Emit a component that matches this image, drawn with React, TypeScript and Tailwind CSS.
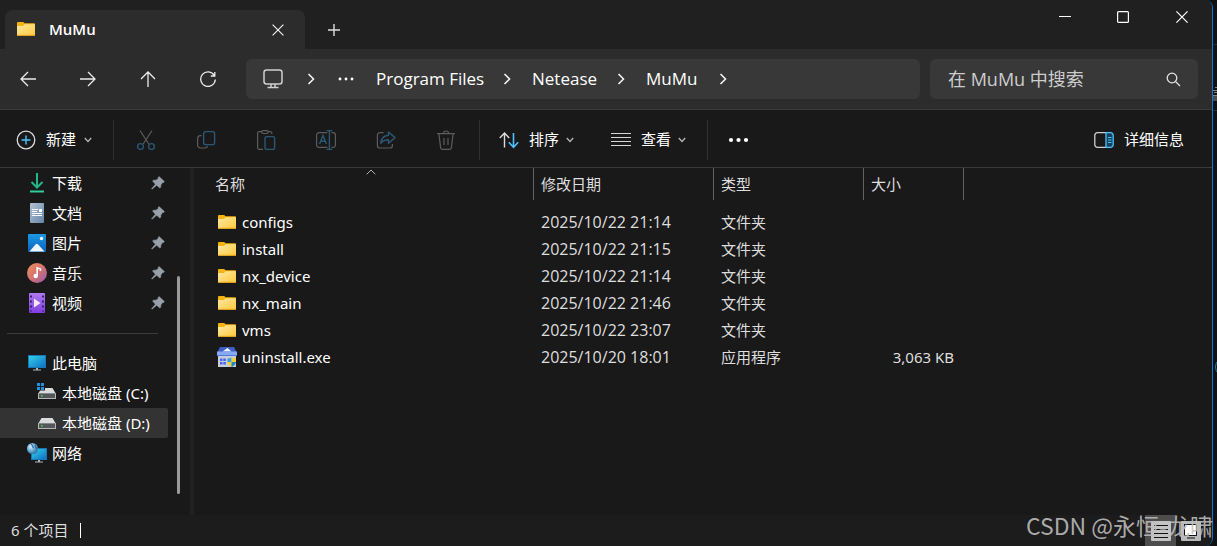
import type { ReactNode } from 'react';

type IconProps = { className?: string };

function FolderIcon() {
  return (
    <svg width="20" height="18" viewBox="0 0 20 18" className="shrink-0" aria-hidden="true">
      <defs>
        <linearGradient id="folder" x1="0" y1="0" x2="1" y2="1">
          <stop offset="0" stopColor="#ffe9a6" />
          <stop offset="1" stopColor="#ffc93a" />
        </linearGradient>
      </defs>
      <path d="M1 2a1 1 0 0 1 1-1h5.200l1.400 1.200H18a1 1 0 0 1 1 1V14H1z" fill="#f7b410" />
      <path d="M1 5h6l1.600-1.800H19V14a.8.8 0 0 1-.8.8H1.800A.8.8 0 0 1 1 14z" fill="url(#folder)" />
      <path d="M1 14.300h18" stroke="#e8a317" strokeWidth="1" />
    </svg>
  );
}

function InstallerIcon() {
  return (
    <svg width="20" height="22" viewBox="0 0 20 22" className="shrink-0" aria-hidden="true">
      <path d="M3 0h14l2.500 5H.5z" fill="#3f5fc4" />
      <path d="M5.500 4.500 10.500 1 14.500 4.500z" fill="#f4f7ff" />
      <rect x="0" y="4.500" width="20" height="4" fill="#86a9f5" />
      <rect x="1" y="8.500" width="18" height="11.500" fill="#c6cddb" />
      <rect x="0" y="8" width="20" height="1" fill="#5478d6" />
      <path d="M3 11.500h2.500V14H3zM6.300 11.500h2.500V14H6.300zM3 15h2.500v2.500H3zM6.300 15h2.500v2.500H6.300z" fill="#4a62f0" />
      <path d="M10.500 11.500c2 0 3-.8 4-1.300v4.800h-4z" fill="#2f9fe8" />
      <path d="M14.500 10.200c1 .5 2 1.300 4.500 1.300V15h-4.500z" fill="#f8d022" />
      <path d="M10.500 15h4v5c-2-1-3.800-2.500-4-5z" fill="#f8d022" />
      <path d="M14.500 15H19c-.2 2.500-2.500 4-4.500 5z" fill="#1f86cc" />
    </svg>
  );
}

function ChevronRight({ className }: IconProps) {
  return (
    <svg width="8" height="12" viewBox="0 0 8 12" fill="none" stroke="#f2f2f2" strokeWidth="1.600" className={className} aria-hidden="true">
      <path d="M1.500 1 6.500 6l-5 5" />
    </svg>
  );
}

function ChevronDown() {
  return (
    <svg width="8" height="6" viewBox="0 0 8 6" fill="none" stroke="#b5b5b5" strokeWidth="1.300" aria-hidden="true">
      <path d="M.8 1 4 4.500 7.200 1" />
    </svg>
  );
}

function Pin() {
  return (
    <svg width="14" height="14" viewBox="0 0 14 14" className="shrink-0" aria-hidden="true">
      <path d="M8 .6 13.400 5.600 12.600 6.400 11.600 6.400 9.800 9 9.700 11.300 8.900 12 5.600 9.200 1.200 13 .6 12.800 4.400 8.200 1.600 4.900 2.500 4.200 5 4.200 7.300 2.400 7.300 1.200z" fill="#98a1a9" stroke="#98a1a9" strokeWidth=".6" strokeLinejoin="round" />
    </svg>
  );
}

function Dots({ size, r }: { size: number; r: number }) {
  return (
    <svg width={size} height="6" viewBox="0 0 20 6" fill="#fff" aria-hidden="true">
      <circle cx="2.500" cy="3" r={r} />
      <circle cx="10" cy="3" r={r} />
      <circle cx="17.500" cy="3" r={r} />
    </svg>
  );
}

function Svg20({ children }: { children: ReactNode }) {
  return (
    <svg width="20" height="20" viewBox="0 0 20 20" fill="none" strokeWidth="1.200" className="shrink-0" aria-hidden="true">
      {children}
    </svg>
  );
}

const GREY = '#5c5c5c';
const BLUE = '#2a5875';

const disabledActions: { label: string; icon: ReactNode }[] = [
  {
    label: '剪切',
    icon: (
      <Svg20>
        <path d="M4 0.500 12.800 14M16 0.500 7.200 14" stroke={GREY} />
        <circle cx="4.500" cy="16.500" r="2.900" stroke={BLUE} strokeWidth="1.400" />
        <circle cx="15.500" cy="16.500" r="2.900" stroke={BLUE} strokeWidth="1.400" />
      </Svg20>
    ),
  },
  {
    label: '复制',
    icon: (
      <Svg20>
        <path d="M5.500 5.600h-1A3 3 0 0 0 1.600 8.500V15a3 3 0 0 0 3 3H9a2.600 2.600 0 0 0 2.500-2" stroke={GREY} />
        <rect x="7.600" y="1.600" width="11" height="13" rx="2.200" stroke={BLUE} strokeWidth="1.400" />
      </Svg20>
    ),
  },
  {
    label: '粘贴',
    icon: (
      <Svg20>
        <path d="M6 1.600H3.300A1.700 1.700 0 0 0 1.600 3.300v14.400a1.700 1.700 0 0 0 1.700 1.700H7M12 1.600h2.200a1.700 1.700 0 0 1 1.700 1.700v1" stroke={GREY} />
        <rect x="5.600" y="0.700" width="6.600" height="2.800" rx="1.400" stroke={GREY} />
        <rect x="9" y="6.600" width="9.600" height="12.800" rx="1.600" stroke={BLUE} strokeWidth="1.400" />
      </Svg20>
    ),
  },
  {
    label: '重命名',
    icon: (
      <Svg20>
        <path d="M11.300 2.600H3A2.400 2.400 0 0 0 .6 5v10A2.400 2.400 0 0 0 3 17.400h8.300M15.500 2.600H17A2.400 2.400 0 0 1 19.400 5v10a2.400 2.400 0 0 1-2.400 2.400h-1.500" stroke={GREY} />
        <path d="M3.600 14 7 5.500 10.400 14M4.800 11.200h4.400M13.400 .6v18.800M10.600 .6h5.600M10.600 19.400h5.600" stroke={BLUE} strokeWidth="1.400" />
      </Svg20>
    ),
  },
  {
    label: '共享',
    icon: (
      <Svg20>
        <path d="M7.500 2.600H4A2.600 2.600 0 0 0 1.400 5.200v10.200A2.600 2.600 0 0 0 4 18h9.800a2.600 2.600 0 0 0 2.600-2.600V14" stroke={GREY} />
        <path d="M12.500 2 19 7.600l-6.500 5.600V9.800c-3.600 0-5.700 1-7.700 3.400.3-4.300 3-7.400 7.700-7.900z" stroke={BLUE} strokeWidth="1.400" strokeLinejoin="round" />
      </Svg20>
    ),
  },
  {
    label: '删除',
    icon: (
      <Svg20>
        <path d="M1 3.600h18M7.400 3.600a2.600 2.600 0 0 1 5.200 0M2.900 3.600l1.700 14a2 2 0 0 0 2 1.800h6.800a2 2 0 0 0 2-1.800l1.700-14M8 8v7M12 8v7" stroke={GREY} />
      </Svg20>
    ),
  },
];

function DownloadIcon() {
  return (
    <Svg20>
      <path d="M10 0v14M4.500 9l5.500 5.500L15.500 9" stroke="#22b68b" strokeWidth="2" />
      <path d="M3 18.500h14" stroke="#2fcf96" strokeWidth="2" />
    </Svg20>
  );
}

function DocumentIcon() {
  return (
    <Svg20>
      <defs>
        <linearGradient id="doc" x1="0" y1="0" x2="1" y2="1">
          <stop offset="0" stopColor="#b3c3d4" />
          <stop offset="1" stopColor="#6485a6" />
        </linearGradient>
      </defs>
      <rect x="3" y="0" width="14" height="20" rx="1" fill="url(#doc)" />
      <path d="M5 6.500h6M5 8.500h5M5 10.500h10M5 12.500h10" stroke="#fff" strokeWidth="1" />
      <rect x="12" y="6" width="3" height="3" fill="#fff" />
    </Svg20>
  );
}

function PictureIcon() {
  return (
    <Svg20>
      <defs>
        <linearGradient id="pic" x1="0" y1="0" x2="0" y2="1">
          <stop offset="0" stopColor="#1c98e6" />
          <stop offset="1" stopColor="#0b62bb" />
        </linearGradient>
      </defs>
      <rect x="1" y="1" width="18" height="18" rx="1" fill="url(#pic)" />
      <path d="M2.500 18.500 8.700 11.300a1.500 1.500 0 0 1 2.200 0l6.600 7.200z" fill="#eef6ff" />
      <circle cx="14.500" cy="5.500" r="1.700" fill="#fff" />
    </Svg20>
  );
}

function MusicIcon() {
  return (
    <Svg20>
      <defs>
        <linearGradient id="mus" x1="0" y1="0" x2="1" y2="1">
          <stop offset="0" stopColor="#f2905a" />
          <stop offset=".5" stopColor="#d4736f" />
          <stop offset="1" stopColor="#9358b0" />
        </linearGradient>
      </defs>
      <circle cx="10" cy="10" r="10" fill="url(#mus)" />
      <circle cx="8.700" cy="13" r="2.200" fill="#fff" />
      <path d="M10.200 13V4.800l3.300 1.200v2" stroke="#fff" strokeWidth="1.600" />
    </Svg20>
  );
}

function VideoIcon() {
  return (
    <Svg20>
      <defs>
        <linearGradient id="vid" x1="0" y1="0" x2="0" y2="1">
          <stop offset="0" stopColor="#b07af0" />
          <stop offset="1" stopColor="#7f3fe0" />
        </linearGradient>
      </defs>
      <rect x="2" y="0" width="16" height="20" rx="1" fill="url(#vid)" />
      <path d="M4 2.500v16M16 2.500v16" stroke="#3a1f78" strokeWidth="2" strokeDasharray="2 3" />
      <path d="M7 5.500 13.500 10 7 14.500z" fill="#f3eaff" />
    </Svg20>
  );
}

function PcIcon() {
  return (
    <Svg20>
      <defs>
        <linearGradient id="pc" x1="0" y1="0" x2="1" y2="1">
          <stop offset="0" stopColor="#35d0e4" />
          <stop offset="1" stopColor="#0f70c8" />
        </linearGradient>
      </defs>
      <rect x="1" y="2" width="18" height="13" fill="#1579b5" />
      <rect x="2" y="3" width="16" height="11" fill="url(#pc)" />
      <path d="M9 15h2v2H9zM6 16.500h8v1H6z" fill="#a9b4bd" />
    </Svg20>
  );
}

function DriveBody() {
  return (
    <>
      <path d="M4.500 5h11L19 11H1z" fill="#d9dbdd" />
      <rect x="1" y="10" width="18" height="6" fill="#b4b6b8" />
      <rect x="2" y="10.500" width="16" height="4.500" fill="#55585a" />
      <rect x="4" y="12" width="1.500" height="1.500" fill="#3ee04a" />
    </>
  );
}

function SystemDriveIcon() {
  return (
    <Svg20>
      <DriveBody />
      <rect x="-1" y="-1" width="9" height="8.500" fill="#191919" />
      <path d="M0 0h3v3H0zM4 0h3v3H4zM0 4h3v3H0zM4 4h3v3H4z" fill="#1f93e0" />
    </Svg20>
  );
}

function DriveIcon() {
  return (
    <Svg20>
      <DriveBody />
    </Svg20>
  );
}

function NetworkIcon() {
  return (
    <Svg20>
      <defs>
        <radialGradient id="globe" cx=".35" cy=".35" r=".7">
          <stop offset="0" stopColor="#dff1fb" />
          <stop offset=".5" stopColor="#6fb0d6" />
          <stop offset="1" stopColor="#2b6f9e" />
        </radialGradient>
      </defs>
      <rect x="4" y="5" width="16" height="12" fill="#1579b5" />
      <rect x="5" y="6" width="14" height="10" fill="url(#pc)" />
      <path d="M11 17h2v2h-2zM8 18.500h8v1H8z" fill="#a9b4bd" />
      <circle cx="5.500" cy="5.500" r="5.500" fill="url(#globe)" />
      <path d="M4 1c2 1 1 3 3 4M8 2c1 1 0 3 2 4" stroke="#2c6d99" />
    </Svg20>
  );
}

const pinned = [
  { label: '下载', icon: <DownloadIcon /> },
  { label: '文档', icon: <DocumentIcon /> },
  { label: '图片', icon: <PictureIcon /> },
  { label: '音乐', icon: <MusicIcon /> },
  { label: '视频', icon: <VideoIcon /> },
];

const places = [
  { label: '此电脑', icon: <PcIcon />, nested: false, selected: false },
  { label: '本地磁盘 (C:)', icon: <SystemDriveIcon />, nested: true, selected: false },
  { label: '本地磁盘 (D:)', icon: <DriveIcon />, nested: true, selected: true },
  { label: '网络', icon: <NetworkIcon />, nested: false, selected: false },
];

const files = [
  { name: 'configs', date: '2025/10/22 21:14', type: '文件夹', size: '' },
  { name: 'install', date: '2025/10/22 21:15', type: '文件夹', size: '' },
  { name: 'nx_device', date: '2025/10/22 21:14', type: '文件夹', size: '' },
  { name: 'nx_main', date: '2025/10/22 21:46', type: '文件夹', size: '' },
  { name: 'vms', date: '2025/10/22 23:07', type: '文件夹', size: '' },
  { name: 'uninstall.exe', date: '2025/10/20 18:01', type: '应用程序', size: '3,063 KB' },
];

function TitleBar() {
  return (
    <header className="flex h-[49px] shrink-0 bg-[#202020] pl-[5px]">
      <div className="mt-[10px] flex w-[300px] items-center rounded-t-lg bg-[#2c2c2c] pr-[15px] pl-[11px]">
        <FolderIcon />
        <h1 className="ml-[13px] flex-1 font-['Open_Sans'] text-[15px] font-semibold">MuMu</h1>
        <button type="button" aria-label="关闭标签页" className="flex size-6 items-center justify-center">
          <svg width="12" height="12" viewBox="0 0 12 12" stroke="#eee" strokeWidth="1.200">
            <path d="m.6.6 10.800 10.800M11.400.6.6 11.400" />
          </svg>
        </button>
      </div>
      <button type="button" aria-label="新建标签页" className="mt-[10px] ml-[9px] flex w-10 items-center justify-center">
        <svg width="12" height="12" viewBox="0 0 12 12" stroke="#ddd" strokeWidth="1.400">
          <path d="M6 0v12M0 6h12" />
        </svg>
      </button>
      <div className="ml-auto flex h-[34px]">
        <button type="button" aria-label="最小化" className="flex w-[58px] items-center justify-center">
          <svg width="12" height="12" viewBox="0 0 12 12" stroke="#fff">
            <path d="M0 5.500h12" />
          </svg>
        </button>
        <button type="button" aria-label="最大化" className="flex w-[58px] items-center justify-center">
          <svg width="12" height="12" viewBox="0 0 12 12" fill="none" stroke="#fff" strokeWidth="1.200">
            <rect x=".6" y=".6" width="10.800" height="10.800" rx="1" />
          </svg>
        </button>
        <button type="button" aria-label="关闭" className="flex w-[60px] items-center justify-center">
          <svg width="12" height="12" viewBox="0 0 12 12" stroke="#fff" strokeWidth="1.200">
            <path d="m.4.4 11.200 11.200M11.600.4.4 11.600" />
          </svg>
        </button>
      </div>
    </header>
  );
}

const navButtons = [
  { label: '后退', d: 'M1 8h15M8 1 1 8l7 7' },
  { label: '前进', d: 'M0 8h15M8 1l7 7-7 7' },
  { label: '向上', d: 'M8 1v15M1 8l7-7 7 7' },
  { label: '刷新', d: 'M14.300 4.400A7.300 7.300 0 1 0 15.300 8.500M14.800 1v4h-4' },
];

function AddressBar() {
  return (
    <div className="flex h-[60px] shrink-0 items-center bg-[#2c2c2c] pr-[14px] pl-2">
      <div className="flex gap-5">
        {navButtons.map((b) => (
          <button key={b.label} type="button" aria-label={b.label} className="flex size-10 items-center justify-center">
            <svg width="16" height="16" viewBox="0 0 16 16" fill="none" stroke="#ececec" strokeWidth="1.300">
              <path d={b.d} />
            </svg>
          </button>
        ))}
      </div>
      <nav aria-label="路径" className="ml-[18px] flex h-10 flex-1 items-center rounded-md bg-[#383838] pl-4 font-['Open_Sans'] text-[17px]">
        <svg width="22" height="20" viewBox="0 0 22 20" fill="none" stroke="#cfcfcf" strokeWidth="1.500" aria-hidden="true">
          <rect x="2" y="1" width="18" height="14" rx="2.500" />
          <path d="M9 15v3M13 15v3M5.500 18.500h11" />
        </svg>
        <ChevronRight className="mx-[23px]" />
        <Dots size={16} r={1.8} />
        <a href="#program-files" className="ml-[22px] w-[106px] whitespace-nowrap">Program Files</a>
        <ChevronRight className="mx-[21px]" />
        <a href="#netease" className="w-[64px] whitespace-nowrap">Netease</a>
        <ChevronRight className="mx-[21px]" />
        <a href="#mumu" className="w-[52px] whitespace-nowrap">MuMu</a>
        <ChevronRight className="mx-[21px]" />
      </nav>
      <label className="ml-[10px] flex h-10 w-[268px] items-center rounded-md bg-[#383838] pr-[17px] pl-[18px]">
        <input
          type="text"
          aria-label="搜索"
          placeholder="在 MuMu 中搜索"
          className="w-0 flex-1 bg-transparent font-['Open_Sans','Noto_Sans_CJK_SC'] text-lg outline-none placeholder:text-[#cdcdcd]"
        />
        <svg width="15" height="15" viewBox="0 0 15 15" fill="none" stroke="#e4e4e4" strokeWidth="1.300" aria-hidden="true">
          <circle cx="6" cy="6" r="4.800" />
          <path d="m9.500 9.500 4.500 4.500" />
        </svg>
      </label>
    </div>
  );
}

function Toolbar() {
  return (
    <div className="flex h-[59px] shrink-0 items-center border-y border-[#3a3a3a] bg-[#191919] pt-[2px] pl-4 text-[15px]">
      <button type="button" className="flex items-center">
        <Svg20>
          <circle cx="10" cy="10" r="8.800" stroke="#dcdcdc" strokeWidth="1.300" />
          <path d="M10 5.500v9M5.500 10h9" stroke="#4cc2ff" strokeWidth="1.400" />
        </Svg20>
        <span className="mr-2 ml-[10px]">新建</span>
        <ChevronDown />
      </button>
      <div className="ml-[21px] h-10 w-px bg-[#303030]" />
      <div className="ml-[2px] flex">
        {disabledActions.map((a) => (
          <button key={a.label} type="button" disabled aria-label={a.label} className="flex h-10 w-[60px] items-center justify-center">
            {a.icon}
          </button>
        ))}
      </div>
      <div className="ml-[3px] h-10 w-px bg-[#303030]" />
      <button type="button" className="ml-[19px] flex items-center">
        <Svg20>
          <path d="M5.500 17.500V3M.8 8l4.700-5 4.700 5" stroke="#dcdcdc" strokeWidth="1.400" />
          <path d="M14.500 3v14M9.800 12.300l4.700 5 4.700-5" stroke="#4cc2ff" strokeWidth="1.600" />
        </Svg20>
        <span className="mr-[7px] ml-[10px]">排序</span>
        <ChevronDown />
      </button>
      <button type="button" className="ml-[37px] flex items-center">
        <Svg20>
          <path d="M0 3.500h20M0 7.500h20M0 11.500h20M0 15.500h20" stroke="#d5d5d5" strokeWidth="1.200" />
        </Svg20>
        <span className="mr-[7px] ml-[10px]">查看</span>
        <ChevronDown />
      </button>
      <div className="ml-[21px] h-10 w-px bg-[#303030]" />
      <button type="button" aria-label="查看更多" className="ml-5 flex h-10 items-center">
        <Dots size={21} r={2.1} />
      </button>
      <button type="button" className="mr-7 ml-auto flex items-center">
        <Svg20>
          <path d="M12 2.700H3.500A2.600 2.600 0 0 0 .8 5.300v9.400a2.600 2.600 0 0 0 2.700 2.600H12" stroke="#cfcfcf" strokeWidth="1.300" />
          <path d="M12 2.700h4.500a2.600 2.600 0 0 1 2.700 2.600v9.400a2.600 2.600 0 0 1-2.700 2.600H12z" fill="#15425a" stroke="#4cc2ff" strokeWidth="1.300" />
          <path d="M14 7.500h3.500M14 10h3.500M14 12.500h3.500" stroke="#4cc2ff" />
        </Svg20>
        <span className="ml-[10px]">详细信息</span>
      </button>
    </div>
  );
}

function Sidebar() {
  return (
    <aside className="flex w-[194px] shrink-0 border-r-4 border-[#212121] text-[15px]">
      <nav aria-label="导航窗格" className="w-[168px]">
        {pinned.map((p) => (
          <a key={p.label} href="#pinned" className="flex h-[30px] items-center pr-[3px] pl-[27px]">
            {p.icon}
            <span className="ml-[5px] flex-1">{p.label}</span>
            <Pin />
          </a>
        ))}
        <hr className="mt-[15px] mr-[10px] mb-[14px] ml-[7px] border-[#3d3d3d]" />
        {places.map((p) => (
          <a
            key={p.label}
            href="#place"
            className={`flex h-[30px] items-center rounded-r-xs ${p.nested ? 'pl-[37px]' : 'pl-[27px]'} ${p.selected ? 'bg-[#333333]' : ''}`}
          >
            {p.icon}
            <span className="ml-[5px] whitespace-nowrap">{p.label}</span>
          </a>
        ))}
      </nav>
      <div className="mt-[108px] ml-[9px] h-[218px] w-[3px] rounded-full bg-[#9a9a9a]" />
    </aside>
  );
}

const columns = ['名称', '修改日期', '类型', '大小'];

function FileList() {
  return (
    <main className="min-w-0 flex-1 text-[15px]">
      <table className="table-fixed border-collapse text-left">
        <colgroup>
          <col className="w-[340px]" />
          <col className="w-[180px]" />
          <col className="w-[150px]" />
          <col className="w-[100px]" />
        </colgroup>
        <thead>
          <tr>
            {columns.map((c, i) => (
              <th key={c} scope="col" className="h-[41px] p-0 align-top font-normal text-[#dedede]">
                <div className={`relative flex h-8 items-center border-r border-[#636363] ${i === 0 ? 'pl-[21px]' : 'pl-[7px]'}`}>
                  {c}
                  {i === 0 && (
                    <svg width="10" height="6" viewBox="0 0 10 6" fill="none" stroke="#b0b0b0" className="absolute top-px left-[172px]" aria-hidden="true">
                      <path d="M.7 5.300 5 1l4.300 4.300" />
                    </svg>
                  )}
                </div>
              </th>
            ))}
          </tr>
        </thead>
        <tbody>
          {files.map((f) => (
            <tr key={f.name} className="h-[27px] whitespace-nowrap text-[#dedede]">
              <td className="p-0 pl-[23px] text-white">
                <div className="flex h-[27px] items-center">
                  {f.size ? <InstallerIcon /> : <FolderIcon />}
                  <span className="ml-[5px]">{f.name}</span>
                </div>
              </td>
              <td className="p-0 pl-[7px] font-['Open_Sans'] text-base leading-[27px]">{f.date}</td>
              <td className="p-0 pl-[7px]">{f.type}</td>
              <td className="p-0 pr-[10px] text-right">{f.size}</td>
            </tr>
          ))}
        </tbody>
      </table>
    </main>
  );
}

function StatusBar() {
  return (
    <footer className="flex h-[31px] shrink-0 items-center bg-[#1c1c1c] pr-[6px] pl-[11px] text-[15px] text-[#dedede]">
      <span>6 个项目</span>
      <span className="ml-3 h-[15px] w-px bg-white" />
      <div className="ml-auto flex h-full">
        <button type="button" aria-label="详细信息视图" className="flex w-[31px] items-center justify-center bg-[#4d4d4d]">
          <svg width="20" height="20" viewBox="0 0 20 20" aria-hidden="true">
            <rect width="20" height="20" rx="1" fill="#c3c3c3" />
            <path d="M3 4.500h14M3 8.500h14M3 12.500h14M3 16.500h14" stroke="#111" />
          </svg>
        </button>
        <button type="button" aria-label="大图标视图" className="flex w-[30px] items-center justify-center">
          <svg width="20" height="20" viewBox="0 0 20 20" aria-hidden="true">
            <rect width="20" height="20" rx="1" fill="#b9b9b9" />
            <rect x="3.500" y="3.500" width="12" height="11" fill="#fff" stroke="#111" />
            <path d="M6 17h8" stroke="#111" />
          </svg>
        </button>
      </div>
    </footer>
  );
}

export default function App() {
  return (
    <div className="relative flex h-screen overflow-hidden bg-[#101214] font-['Noto_Sans','Noto_Sans_CJK_SC',sans-serif] text-white">
      <div className="flex min-w-0 flex-1 flex-col overflow-hidden rounded-r-lg border-r border-[#0a78d4] bg-[#191919]">
        <TitleBar />
        <AddressBar />
        <Toolbar />
        <div className="flex min-h-0 flex-1">
          <Sidebar />
          <FileList />
        </div>
        <StatusBar />
      </div>
      <div aria-hidden="true" className="w-1 shrink-0 overflow-hidden pt-11">
        <div className="h-[67px] border-y border-[#2a2c2e] pt-[42px]">
          <svg width="4" height="14" viewBox="0 0 4 14" fill="none" stroke="#8b8178">
            <path d="M2 .5h2M0 3.500h4M1 5.500h3M0 8.500h4M1 8v6M3 8v6" />
          </svg>
        </div>
        <div className="mt-[246px] ml-[2px] size-5 rounded-full border border-[#2b7f93]" />
      </div>
      <p className="pointer-events-none absolute right-1 bottom-[5px] font-['Noto_Sans_CJK_SC'] text-[23px] leading-8 whitespace-nowrap text-[#bebebe]/90">
        CSDN @永恒-龙啸
      </p>
    </div>
  );
}
